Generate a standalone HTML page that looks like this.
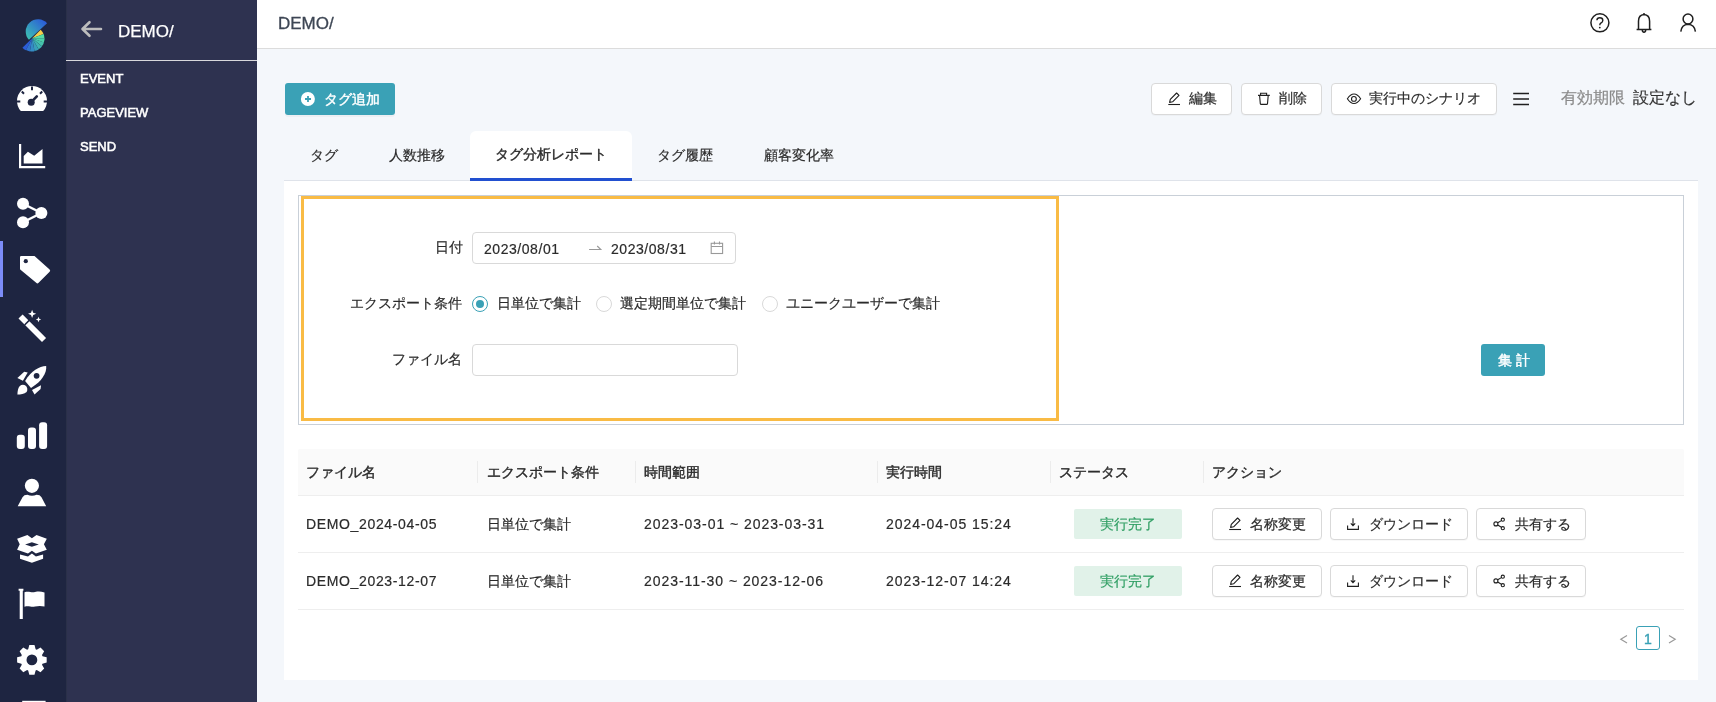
<!DOCTYPE html>
<html><head><meta charset="utf-8">
<style>
*{box-sizing:border-box;margin:0;padding:0}
html,body{width:1716px;height:702px;overflow:hidden}
body{position:relative;background:#f4f7fb;font-family:"Liberation Sans",sans-serif;font-size:14px;color:#2b2b2b}
.a{position:absolute}
.rail{left:0;top:0;width:66px;height:702px;background:#1e2541}
.side{left:66px;top:0;width:191px;height:702px;background:#2e3250;border-left:1px solid #2a3049}
.hdr{left:257px;top:0;width:1459px;height:49px;background:#fff;border-bottom:1px solid #dcdcdc}
.btn{position:absolute;height:32px;background:#fff;border:1px solid #d9d9d9;border-radius:4px;box-shadow:0 1px 1px rgba(0,0,0,.03)}
.btn span{position:absolute;white-space:nowrap}
.t{position:absolute;white-space:nowrap;line-height:1;will-change:transform;-webkit-text-stroke:.2px currentColor}
.btn span{will-change:transform;-webkit-text-stroke:.2px currentColor}
.t.m{-webkit-text-stroke:.4px currentColor}
svg{position:absolute;overflow:visible}
</style></head><body>
<!-- icon rail -->
<div class="a rail"></div>
<div class="a" style="left:0;top:241px;width:3px;height:56px;background:#7c8cf8"></div>
<svg style="left:0;top:0" width="66" height="702" viewBox="0 0 66 702">
<defs><linearGradient id="lg" x1="28" y1="40" x2="46" y2="22" gradientUnits="userSpaceOnUse"><stop offset="0" stop-color="#3cc2b2"/><stop offset="1" stop-color="#2b5bd8"/></linearGradient></defs>
<path d="M47.1 23.3A12.28 12.28 0 0 0 28.9 39.8Z" fill="url(#lg)"/>
<path d="M32.2 38.2L40.69 29.71A12.0 12.0 0 0 1 43.48 34.10Z" fill="#f6cf4a"/>
<path d="M32.2 38.2L43.66 34.03A12.2 12.2 0 0 1 44.40 38.20Z" fill="#56dca6"/>
<path d="M32.2 38.2L44.60 38.20A12.4 12.4 0 0 1 43.85 42.44Z" fill="#4dd0a8"/>
<path d="M32.2 38.2L44.04 42.51A12.6 12.6 0 0 1 41.85 46.30Z" fill="#45c2ac"/>
<path d="M32.2 38.2L42.01 46.43A12.8 12.8 0 0 1 38.60 49.29Z" fill="#3eb3b2"/>
<path d="M32.2 38.2L38.70 49.46A13.0 13.0 0 0 1 34.46 51.00Z" fill="#389fb9"/>
<path d="M32.2 38.2L34.49 51.20A13.2 13.2 0 0 1 29.91 51.20Z" fill="#348bc4"/>
<path d="M32.2 38.2L29.87 51.40A13.4 13.4 0 0 1 25.91 50.03Z" fill="#3074cf"/>
<path d="M32.2 38.2L25.82 50.21A13.6 13.6 0 0 1 22.42 47.65Z" fill="#2c5dd8"/>
<g fill="#fff">
<path d="M20.8 111A15 15 0 1 1 43.2 111Z"/>
<path d="M19 144h2.2v22h24v2.3H19z"/>
<path d="M23.7 163.5V156l4.2-4.2 6.3 4 8.3-6.9v14.6z"/>
<circle cx="23" cy="203.8" r="6"/><circle cx="41.4" cy="213" r="6"/><circle cx="23" cy="222.2" r="6"/>
<path d="M20 257.2Q20 256 21.2 256H34.5L49.6 269.4Q50.8 270.6 49.6 271.8L38.6 282.8Q37.4 284 36.2 282.8L20.2 269.4Q20 269.2 20 268.6Z"/>
<path d="M32.1 309.8L33.2 312.7 36.2 313.8 33.2 314.9 32.1 317.9 31 314.9 28 313.8 31 312.7ZM38.5 316.8L39.3 318.7 41.2 319.5 39.3 320.3 38.5 322.2 37.7 320.3 35.8 319.5 37.7 318.7Z"/>
<path d="M46.2 366.1C46.8 373 42 381.5 31 387.9L25.1 380.9C31.5 371 39 366.5 46.2 366.1Z"/>
<path d="M17.4 378.1L24.2 371.8 27.7 372.4 22.9 380.8Z"/>
<path d="M32 390L41 385.2 40.6 389 34.5 394.6Z"/>
<path d="M17.4 394.6C17.5 391 18.2 387.5 19.8 386 21.5 384.5 24 384.6 25.4 385.5 27.4 387 28 389.5 26.6 392 24.5 394 20.5 394.6 17.4 394.6Z"/>
<rect x="16.8" y="434.8" width="8" height="14.2" rx="3"/>
<rect x="28" y="427.4" width="8" height="21.6" rx="3"/>
<rect x="39.1" y="422.3" width="8" height="26.7" rx="3"/>
<circle cx="31.9" cy="485.8" r="7.1"/>
<path d="M17.7 506.2L22.5 497.2Q24 494.8 27.4 494.8Q32 496.6 36.6 494.8Q40 494.8 41.5 497.2L46.2 506.2Z"/>
<path d="M17.1 538.8L27.4 535.1 31.9 538.3 36.5 535.1 46.8 538.8 43.9 544.2 46.8 549.7 35.9 553.6 31.9 550.8 28 553.6 17.1 549.7 19.7 544.2Z"/>
<path d="M20 554.4L28 556.6 31.9 553.4 35.9 556.6 43.1 554.4V558.8L31.9 562.8 20 558.8Z"/>
<path d="M19.7 590.5h3.1V619h-3.1zM18.6 588.8h4.8v2h-4.8z"/>
<path d="M24.5 592.2C29 590.6 31 593 35 592 38.5 591.3 41 591.5 44.5 592.4V606.6C41 605.8 38.5 605.8 35 606.6 31 607.6 29 605.4 24.5 606.8Z"/>
<path d="M28.17 649.34 L29.31 645.12 L34.49 645.12 L35.63 649.34 L36.73 649.80 L40.52 647.62 L44.18 651.28 L42.00 655.07 L42.46 656.17 L46.68 657.31 L46.68 662.49 L42.46 663.63 L42.00 664.73 L44.18 668.52 L40.52 672.18 L36.73 670.00 L35.63 670.46 L34.49 674.68 L29.31 674.68 L28.17 670.46 L27.07 670.00 L23.28 672.18 L19.62 668.52 L21.80 664.73 L21.34 663.63 L17.12 662.49 L17.12 657.31 L21.34 656.17 L21.80 655.07 L19.62 651.28 L23.28 647.62 L27.07 649.80Z"/>
<rect x="22.2" y="700.8" width="23.4" height="4"/>
</g>
<g fill="#1e2541" stroke="#1e2541">
<path d="M32 86.5V90.2" stroke-width="2" fill="none"/>
<path d="M21.8 91.5L24 93.7M42.2 91.5L40 93.7" stroke-width="2" fill="none"/>
<path d="M16.5 101.5H20.3M43.7 101.5H47.5" stroke-width="2" fill="none"/>
<circle cx="31.2" cy="102.2" r="3.5" stroke="none"/>
<path d="M31.2 102.2L36.8 96.4" stroke-width="2.6" fill="none" stroke-linecap="round"/>
<path d="M23 203.8L41.4 213 23 222.2" stroke="#fff" stroke-width="2.4" fill="none"/>
<circle cx="25.8" cy="261.2" r="2.1" stroke="none"/>
<circle cx="36.6" cy="375.8" r="2.9" stroke="none"/>
<path d="M31.9 544.5m-6.8 0 6.8-2.3 6.9 2.3-6.9 2.3z" stroke="none"/>
<circle cx="31.9" cy="659.9" r="5.4" stroke="none"/>
</g>
<path d="M22.6 318.6L42 338" stroke="#fff" stroke-width="5.8" stroke-linecap="square" stroke-linejoin="round"/>
<path d="M24.6 325L29.2 320.4" stroke="#1e2541" stroke-width="1.5"/>
</svg>
<!-- second sidebar -->
<div class="a side"></div>
<div class="a" style="left:66px;top:60px;width:191px;height:1px;background:#d8d8dc"></div>
<div class="t" style="left:118px;top:23px;font-size:17px;color:#fff;-webkit-text-stroke:.25px #fff">DEMO/</div>
<div class="t" style="left:80px;top:72px;font-size:13px;color:#fff;-webkit-text-stroke:.55px #fff">EVENT</div>
<div class="t" style="left:80px;top:106px;font-size:13px;color:#fff;-webkit-text-stroke:.55px #fff">PAGEVIEW</div>
<div class="t" style="left:80px;top:140px;font-size:13px;color:#fff;-webkit-text-stroke:.55px #fff">SEND</div>
<!-- header -->
<div class="a hdr"></div>
<div class="t" style="left:278px;top:15px;font-size:17px;color:#3d4654;-webkit-text-stroke:.3px #3d4654">DEMO/</div>

<!-- tag add -->
<div class="a" style="left:285px;top:83px;width:110px;height:32px;background:#3aa1b6;border-radius:3px;box-shadow:0 2px 0 rgba(0,0,0,.03)"></div>
<div class="t" style="left:324px;top:92px;color:#fff;-webkit-text-stroke:.4px #fff">タグ追加</div>

<!-- top right buttons -->
<div class="btn" style="left:1151px;top:83px;width:81px"><span style="left:37px;top:6px">編集</span></div>
<div class="btn" style="left:1241px;top:83px;width:81px"><span style="left:37px;top:6px">削除</span></div>
<div class="btn" style="left:1331px;top:83px;width:166px"><span style="left:37px;top:6px">実行中のシナリオ</span></div>
<div class="t" style="left:1561px;top:90px;font-size:16px;color:#8a8a8a">有効期限</div>
<div class="t" style="left:1633px;top:90px;font-size:16px;color:#333">設定なし</div>

<!-- tabs -->
<div class="a" style="left:284px;top:180px;width:1414px;height:1px;background:#dfe3ea"></div>
<div class="a" style="left:470px;top:131px;width:162px;height:50px;background:#fff;border-radius:6px 6px 0 0"></div>
<div class="a" style="left:470px;top:178px;width:162px;height:3px;background:#2250d0"></div>
<div class="t" style="left:310px;top:148px">タグ</div>
<div class="t" style="left:389px;top:148px">人数推移</div>
<div class="t m" style="left:495px;top:147px">タグ分析レポート</div>
<div class="t" style="left:657px;top:148px">タグ履歴</div>
<div class="t" style="left:764px;top:148px">顧客変化率</div>

<!-- panel -->
<div class="a" style="left:284px;top:181px;width:1414px;height:499px;background:#fff"></div>
<div class="a" style="left:298px;top:195px;width:1386px;height:230px;border:1px solid #c9d0d8"></div>
<div class="a" style="left:301px;top:196px;width:758px;height:225px;border:3px solid #f9bb45"></div>

<div class="t" style="left:435px;top:240px">日付</div>
<div class="a" style="left:472px;top:232px;width:264px;height:32px;border:1px solid #d9d9d9;border-radius:4px"></div>
<div class="t" style="left:484px;top:242px;letter-spacing:.55px">2023/08/01</div>
<div class="t" style="left:611px;top:242px;letter-spacing:.55px">2023/08/31</div>

<div class="t" style="left:350px;top:296px">エクスポート条件</div>
<div class="a" style="left:472px;top:296px;width:16px;height:16px;border:1px solid #3aa1b6;border-radius:50%"></div>
<div class="a" style="left:476px;top:300px;width:8px;height:8px;background:#3aa1b6;border-radius:50%"></div>
<div class="t" style="left:497px;top:296px">日単位で集計</div>
<div class="a" style="left:596px;top:296px;width:16px;height:16px;border:1px solid #d9d9d9;border-radius:50%"></div>
<div class="t" style="left:620px;top:296px">選定期間単位で集計</div>
<div class="a" style="left:762px;top:296px;width:16px;height:16px;border:1px solid #d9d9d9;border-radius:50%"></div>
<div class="t" style="left:786px;top:296px">ユニークユーザーで集計</div>

<div class="t" style="left:392px;top:352px">ファイル名</div>
<div class="a" style="left:472px;top:344px;width:266px;height:32px;border:1px solid #d9d9d9;border-radius:4px"></div>

<div class="a" style="left:1481px;top:344px;width:64px;height:32px;background:#3aa1b6;border-radius:3px"></div>
<div class="t" style="left:1498px;top:353px;color:#fff;letter-spacing:4px;-webkit-text-stroke:.45px #fff">集計</div>

<!-- table -->
<div class="a" style="left:298px;top:449px;width:1386px;height:47px;background:#fafafa;border-bottom:1px solid #eee;border-radius:2px 2px 0 0"></div>
<div class="a" style="left:298px;top:552px;width:1386px;height:1px;background:#eee"></div>
<div class="a" style="left:298px;top:609px;width:1386px;height:1px;background:#eee"></div>

<div class="a" style="left:477px;top:461px;width:1px;height:22px;background:#ececec"></div>
<div class="a" style="left:635px;top:461px;width:1px;height:22px;background:#ececec"></div>
<div class="a" style="left:877px;top:461px;width:1px;height:22px;background:#ececec"></div>
<div class="a" style="left:1050px;top:461px;width:1px;height:22px;background:#ececec"></div>
<div class="a" style="left:1203px;top:461px;width:1px;height:22px;background:#ececec"></div>
<div class="t m" style="left:306px;top:465px">ファイル名</div>
<div class="t m" style="left:487px;top:465px">エクスポート条件</div>
<div class="t m" style="left:644px;top:465px">時間範囲</div>
<div class="t m" style="left:886px;top:465px">実行時間</div>
<div class="t m" style="left:1059px;top:465px">ステータス</div>
<div class="t m" style="left:1212px;top:465px">アクション</div>

<div class="t" style="left:306px;top:517px;letter-spacing:.65px">DEMO_2024-04-05</div>
<div class="t" style="left:487px;top:517px">日単位で集計</div>
<div class="t" style="left:644px;top:517px;letter-spacing:.95px">2023-03-01 ~ 2023-03-31</div>
<div class="t" style="left:886px;top:517px;letter-spacing:.95px">2024-04-05 15:24</div>
<div class="a" style="left:1074px;top:509px;width:108px;height:30px;background:#e1f2e9;border-radius:2px"></div>
<div class="t" style="left:1100px;top:517px;color:#2f9e63">実行完了</div>
<div class="btn" style="left:1212px;top:508px;width:110px"><span style="left:37px;top:7px">名称変更</span></div>
<div class="btn" style="left:1330px;top:508px;width:138px"><span style="left:38px;top:7px">ダウンロード</span></div>
<div class="btn" style="left:1476px;top:508px;width:110px"><span style="left:38px;top:7px">共有する</span></div>

<div class="t" style="left:306px;top:574px;letter-spacing:.65px">DEMO_2023-12-07</div>
<div class="t" style="left:487px;top:574px">日単位で集計</div>
<div class="t" style="left:644px;top:574px;letter-spacing:.95px">2023-11-30 ~ 2023-12-06</div>
<div class="t" style="left:886px;top:574px;letter-spacing:.95px">2023-12-07 14:24</div>
<div class="a" style="left:1074px;top:566px;width:108px;height:30px;background:#e1f2e9;border-radius:2px"></div>
<div class="t" style="left:1100px;top:574px;color:#2f9e63">実行完了</div>
<div class="btn" style="left:1212px;top:565px;width:110px"><span style="left:37px;top:7px">名称変更</span></div>
<div class="btn" style="left:1330px;top:565px;width:138px"><span style="left:38px;top:7px">ダウンロード</span></div>
<div class="btn" style="left:1476px;top:565px;width:110px"><span style="left:38px;top:7px">共有する</span></div>

<!-- pagination -->
<div class="a" style="left:1636px;top:626px;width:24px;height:24px;border:1px solid #3aa1b6;border-radius:3px"></div>
<div class="t m" style="left:1644px;top:632px;color:#3aa1b6">1</div>

<!-- header icons -->
<svg style="left:0;top:0" width="1716" height="702" viewBox="0 0 1716 702">
<g fill="none" stroke="#1f1f1f" stroke-width="1.5">
<circle cx="1599.9" cy="22.8" r="9"/>
<path d="M1596.9 20.2Q1597 17.8 1599.8 17.8 1602.8 17.8 1602.8 20.4 1602.8 22 1600.8 23.2 1599.8 23.8 1599.8 25.2" stroke-width="1.4"/>
<path d="M1638.5 29.2V21.2Q1638.5 15 1644 14.6 1649.6 15 1649.6 21.2V29.2M1636.6 29.4H1651.4M1644 13V14.6M1642.3 29.8Q1642.3 32.2 1644 32.2 1645.7 32.2 1645.7 29.8"/>
<circle cx="1688" cy="19" r="4.9"/>
<path d="M1680.8 31.6Q1681.6 24.6 1688 24.2 1694.6 24.6 1695.4 31.6"/>
</g>
<circle cx="1599.8" cy="27.6" r="0.9" fill="#1f1f1f"/>

<!-- tag add plus -->
<circle cx="307.9" cy="99" r="7" fill="#fff"/>
<path d="M305 99H311M308 96V102" stroke="#3aa1b6" stroke-width="1.8"/>

<!-- edit pencil -->
<g fill="none" stroke="#1f1f1f" stroke-width="1.1">
<path d="M1168.3 104.5H1180"/>
<path d="M1169.6 102.4L1170.3 99.4 1176.6 93 1179 95.4 1172.6 101.8Z" stroke-linejoin="round"/>
<!-- trash -->
<path d="M1258 95.4H1269.8M1260.6 95.4V93.2H1266.6V95.4M1259.6 95.6L1260.3 103.6Q1260.4 104.4 1261.2 104.4H1266.6Q1267.4 104.4 1267.5 103.6L1268.2 95.6"/>
<!-- eye -->
<path d="M1347.4 98.8Q1350.4 94 1354 94 1357.6 94 1360.6 98.8 1357.6 103.5 1354 103.5 1350.4 103.5 1347.4 98.8Z"/>
<circle cx="1353.9" cy="98.9" r="2.4"/>
<!-- hamburger -->
<path d="M1513.2 93.5H1529M1513.2 99H1529M1513.2 104.5H1529" stroke-width="1.35"/>
</g>
<g fill="none" stroke="#999" stroke-width="1.1">
<path d="M589.1 249.5H600.8L597.2 246"/>
<rect x="711.2" y="243.3" width="11.4" height="10.2"/>
<path d="M711.2 246.5H722.6M714.4 241.6V244.6M719.5 241.6V244.6"/>
</g>
<g id="ri" fill="none" stroke="#1f1f1f" stroke-width="1.1">
<path d="M1229.2 529.5H1241"/>
<path d="M1230.6 527.4L1231.3 524.4 1237.6 518 1240 520.4 1233.6 526.8Z" stroke-linejoin="round"/>
<path d="M1353 518.2V525.4M1350.8 523.4L1353 525.6 1355.2 523.4M1347.6 525.4V529.4H1358.4V525.4"/>
<circle cx="1495.9" cy="523.9" r="2"/>
<circle cx="1502.8" cy="519.7" r="1.6"/>
<circle cx="1502.8" cy="528.2" r="1.6"/>
<path d="M1497.7 522.8L1501.4 520.6M1497.7 525L1501.4 527.3"/>
</g>
<use href="#ri" transform="translate(0,57)"/>
<g fill="none" stroke="#999" stroke-width="1.2">
<path d="M1627 635.5L1620.8 639.2 1627 643"/>
<path d="M1669 635.5L1675.2 639.2 1669 643"/>
</g>
</svg>
<svg style="left:0;top:0" width="300" height="60"><path d="M101 29H83M89.5 22.2L82.5 29 89.5 35.8" fill="none" stroke="#bdbdbd" stroke-width="2.6" stroke-linecap="round" stroke-linejoin="round"/></svg>
</body></html>
